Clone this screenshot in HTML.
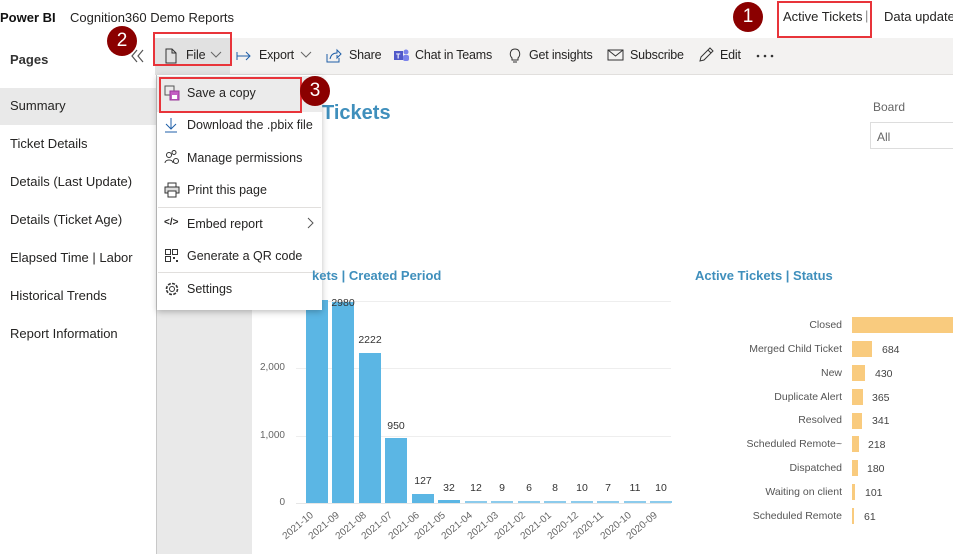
<!DOCTYPE html>
<html><head><meta charset="utf-8"><style>
*{margin:0;padding:0;box-sizing:border-box}
body{width:953px;height:554px;overflow:hidden;position:relative;background:#fff;font-family:"Liberation Sans",sans-serif;color:#252423;font-size:13px}
.a{position:absolute;white-space:nowrap}
.badge{position:absolute;width:30px;height:30px;border-radius:50%;background:#8b0000;color:#fff;font-size:19px;text-align:center;line-height:30px}
.red{position:absolute;border:2px solid #e8343a}
.tb{font-size:12.5px;color:#252423;top:48px;letter-spacing:-0.2px}
.pg{left:10px;font-size:13px}
.mi{left:187px;font-size:12.5px}
.yl{font-size:10px;color:#666;text-align:right;width:40px}
.bar{position:absolute;background:#5bb6e4;width:22px}
.vl{position:absolute;font-size:10.5px;color:#333;width:30px;text-align:center}
.xl{position:absolute;font-size:10px;color:#666;transform:rotate(-40deg);transform-origin:right top}
.sl{position:absolute;right:111px;font-size:10.5px;color:#555;text-align:right}
.sb{position:absolute;left:852px;height:16px;background:#f9cb7e}
.sv{position:absolute;font-size:10.5px;color:#444}
</style></head><body>
<div class="a" style="left:0;top:10px;font-size:13px;font-weight:bold;color:#111">Power BI</div>
<div class="a" style="left:70px;top:10px;font-size:13px">Cognition360 Demo Reports</div>
<div class="a" style="left:783px;top:9px;font-size:13px">Active Tickets</div>
<div class="a" style="left:865px;top:8px;font-size:13px;color:#888">|</div>
<div class="a" style="left:884px;top:9px;font-size:13px">Data updated</div>
<div class="red" style="left:777px;top:1px;width:95px;height:37px"></div>
<div class="badge" style="left:733px;top:2px">1</div>

<div class="a" style="left:155px;top:38px;width:798px;height:37px;background:#f3f2f1;border-bottom:1px solid #e1dfdd"></div>
<div class="a" style="left:155px;top:38px;width:75px;height:37px;background:#e1e1e1"></div>
<div class="red" style="left:153px;top:32px;width:79px;height:34px"></div>
<div class="badge" style="left:107px;top:26px">2</div>
<svg class="a" style="left:128px;top:48px" width="20" height="16"><path d="M9 2 L4 8 L9 14 M15 2 L10 8 L15 14" stroke="#555" fill="none" stroke-width="1.2"/></svg>
<div class="a" style="left:10px;top:52px;font-size:13px;font-weight:bold;color:#333">Pages</div>
<svg class="a" style="left:164px;top:48px" width="14" height="16"><path d="M2 1 H8 L12 5 V15 H2 Z M8 1 V5 H12" stroke="#333" fill="none"/></svg>
<div class="a tb" style="left:186px">File</div>
<svg class="a" style="left:210px;top:51px" width="12" height="8"><path d="M1 1 L6 6 L11 1" stroke="#666" fill="none"/></svg>
<svg class="a" style="left:236px;top:50px" width="16" height="12"><path d="M1 2 V10 M1 6 H14 M10 2 L14 6 L10 10" stroke="#1f5fa8" fill="none"/></svg>
<div class="a tb" style="left:259px">Export</div>
<svg class="a" style="left:300px;top:51px" width="12" height="8"><path d="M1 1 L6 6 L11 1" stroke="#666" fill="none"/></svg>
<svg class="a" style="left:326px;top:48px" width="16" height="15"><path d="M1 6 V14 H13 V10 M4 11 C5 6 8 5 11 5 V2 L15 6 L11 10 V7" stroke="#1f5fa8" fill="none"/></svg>
<div class="a tb" style="left:349px">Share</div>
<svg class="a" style="left:393px;top:47px" width="17" height="16"><rect x="1" y="4" width="9" height="9" fill="#5059c9"/><circle cx="13" cy="5" r="2.5" fill="#7b83eb"/><rect x="10" y="8" width="6" height="6" rx="2" fill="#7b83eb"/><text x="3" y="11.5" font-size="7" fill="#fff" font-family="Liberation Sans" font-weight="bold">T</text></svg>
<div class="a tb" style="left:415px">Chat in Teams</div>
<svg class="a" style="left:508px;top:47px" width="14" height="17"><path d="M4 11 C1 8 2 2 7 2 C12 2 13 8 10 11 V13 H4 Z M5 15 H9" stroke="#333" fill="none"/></svg>
<div class="a tb" style="left:529px">Get insights</div>
<svg class="a" style="left:607px;top:49px" width="17" height="12"><rect x="1" y="1" width="15" height="10" stroke="#333" fill="none"/><path d="M1 1 L8.5 7 L16 1" stroke="#333" fill="none"/></svg>
<div class="a tb" style="left:630px">Subscribe</div>
<svg class="a" style="left:698px;top:47px" width="16" height="16"><path d="M2 14 L3 10 L12 1 L15 4 L6 13 Z M10 3 L13 6" stroke="#333" fill="none"/></svg>
<div class="a tb" style="left:720px">Edit</div>
<svg class="a" style="left:756px;top:54px" width="18" height="4"><circle cx="2" cy="2" r="1.3" fill="#333"/><circle cx="9" cy="2" r="1.3" fill="#333"/><circle cx="16" cy="2" r="1.3" fill="#333"/></svg>

<div class="a" style="left:0;top:88px;width:156px;height:37px;background:#e9e9e9"></div>
<div class="a pg" style="top:98px">Summary</div>
<div class="a pg" style="top:136px">Ticket Details</div>
<div class="a pg" style="top:174px">Details (Last Update)</div>
<div class="a pg" style="top:212px">Details (Ticket Age)</div>
<div class="a pg" style="top:250px">Elapsed Time | Labor</div>
<div class="a pg" style="top:288px">Historical Trends</div>
<div class="a pg" style="top:326px">Report Information</div>
<div class="a" style="left:156px;top:75px;width:1px;height:479px;background:#c8c8c8"></div>
<div class="a" style="left:157px;top:75px;width:95px;height:479px;background:#e9e9e9"></div>

<div class="a" style="left:322px;top:102px;font-size:20px;font-weight:bold;color:#3f8fbc">Tickets</div>
<div class="a" style="left:873px;top:100px;font-size:12px;color:#666">Board</div>
<div class="a" style="left:870px;top:122px;width:90px;height:27px;border:1px solid #ddd"></div>
<div class="a" style="left:877px;top:130px;font-size:12px;color:#666">All</div>

<div class="a" style="left:695px;top:268px;font-size:13px;font-weight:bold;color:#3f8fbc">Active Tickets | Status</div>

<div class="a" style="left:296px;top:301px;width:375px;height:1px;background:#eee"></div>
<div class="a" style="left:296px;top:368px;width:375px;height:1px;background:#eee"></div>
<div class="a" style="left:296px;top:436px;width:375px;height:1px;background:#eee"></div>
<div class="a" style="left:296px;top:503px;width:375px;height:1px;background:#e6e6e6"></div>
<div class="a yl" style="left:245px;top:362px">2,000</div>
<div class="a yl" style="left:245px;top:430px">1,000</div>
<div class="a yl" style="left:245px;top:497px">0</div>

<div class="bar" style="left:306px;top:300px;height:203px"></div>
<div class="bar" style="left:332px;top:302px;height:201px"></div>
<div class="bar" style="left:359px;top:353px;height:150px"></div>
<div class="bar" style="left:385px;top:438px;height:65px"></div>
<div class="bar" style="left:412px;top:494px;height:9px"></div>
<div class="bar" style="left:438px;top:500px;height:3px"></div>
<div class="bar" style="left:465px;top:501px;height:2px;background:#8ccbec"></div>
<div class="bar" style="left:491px;top:501px;height:2px;background:#8ccbec"></div>
<div class="bar" style="left:518px;top:501px;height:2px;background:#8ccbec"></div>
<div class="bar" style="left:544px;top:501px;height:2px;background:#8ccbec"></div>
<div class="bar" style="left:571px;top:501px;height:2px;background:#8ccbec"></div>
<div class="bar" style="left:597px;top:501px;height:2px;background:#8ccbec"></div>
<div class="bar" style="left:624px;top:501px;height:2px;background:#8ccbec"></div>
<div class="bar" style="left:650px;top:501px;height:2px;background:#8ccbec"></div>

<div class="vl" style="left:303px;top:297px">6</div>
<div class="vl" style="left:328px;top:297px">2980</div>
<div class="vl" style="left:355px;top:334px">2222</div>
<div class="vl" style="left:381px;top:420px">950</div>
<div class="vl" style="left:408px;top:475px">127</div>
<div class="vl" style="left:434px;top:482px">32</div>
<div class="vl" style="left:461px;top:482px">12</div>
<div class="vl" style="left:487px;top:482px">9</div>
<div class="vl" style="left:514px;top:482px">6</div>
<div class="vl" style="left:540px;top:482px">8</div>
<div class="vl" style="left:567px;top:482px">10</div>
<div class="vl" style="left:593px;top:482px">7</div>
<div class="vl" style="left:620px;top:482px">11</div>
<div class="vl" style="left:646px;top:482px">10</div>

<div class="xl" style="left:272px;top:510px">2021-10</div>
<div class="xl" style="left:298px;top:510px">2021-09</div>
<div class="xl" style="left:325px;top:510px">2021-08</div>
<div class="xl" style="left:351px;top:510px">2021-07</div>
<div class="xl" style="left:378px;top:510px">2021-06</div>
<div class="xl" style="left:404px;top:510px">2021-05</div>
<div class="xl" style="left:431px;top:510px">2021-04</div>
<div class="xl" style="left:457px;top:510px">2021-03</div>
<div class="xl" style="left:484px;top:510px">2021-02</div>
<div class="xl" style="left:510px;top:510px">2021-01</div>
<div class="xl" style="left:537px;top:510px">2020-12</div>
<div class="xl" style="left:563px;top:510px">2020-11</div>
<div class="xl" style="left:590px;top:510px">2020-10</div>
<div class="xl" style="left:616px;top:510px">2020-09</div>

<div class="sl" style="top:319px">Closed</div>
<div class="sl" style="top:343px">Merged Child Ticket</div>
<div class="sl" style="top:367px">New</div>
<div class="sl" style="top:391px">Duplicate Alert</div>
<div class="sl" style="top:414px">Resolved</div>
<div class="sl" style="top:438px">Scheduled Remote~</div>
<div class="sl" style="top:462px">Dispatched</div>
<div class="sl" style="top:486px">Waiting on client</div>
<div class="sl" style="top:510px">Scheduled Remote</div>
<div class="sb" style="top:317px;width:110px"></div>
<div class="sb" style="top:341px;width:20px"></div>
<div class="sb" style="top:365px;width:13px"></div>
<div class="sb" style="top:389px;width:11px"></div>
<div class="sb" style="top:413px;width:10px"></div>
<div class="sb" style="top:436px;width:7px"></div>
<div class="sb" style="top:460px;width:6px"></div>
<div class="sb" style="top:484px;width:3px"></div>
<div class="sb" style="top:508px;width:2px"></div>
<div class="sv" style="left:882px;top:344px">684</div>
<div class="sv" style="left:875px;top:368px">430</div>
<div class="sv" style="left:872px;top:392px">365</div>
<div class="sv" style="left:872px;top:415px">341</div>
<div class="sv" style="left:868px;top:439px">218</div>
<div class="sv" style="left:867px;top:463px">180</div>
<div class="sv" style="left:865px;top:487px">101</div>
<div class="sv" style="left:864px;top:511px">61</div>

<div class="a" style="left:157px;top:75px;width:165px;height:235px;background:#fff;box-shadow:0 2px 6px rgba(0,0,0,.25)"></div>
<div class="a" style="left:157px;top:76px;width:165px;height:36px;background:#ebebeb"></div>
<div class="red" style="left:159px;top:77px;width:143px;height:36px"></div>
<div class="badge" style="left:300px;top:76px">3</div>
<div class="a" style="left:158px;top:207px;width:163px;height:1px;background:#e1dfdd"></div>
<div class="a" style="left:158px;top:272px;width:163px;height:1px;background:#e1dfdd"></div>
<svg class="a" style="left:164px;top:85px" width="16" height="16"><rect x="1" y="1" width="9" height="9" stroke="#555" fill="none"/><rect x="6" y="6" width="9" height="9" fill="#c35fc3" stroke="#9a3a9a"/><rect x="8" y="10" width="5" height="4" fill="#fff"/></svg>
<div class="a mi" style="top:86px">Save a copy</div>
<svg class="a" style="left:164px;top:117px" width="14" height="16"><path d="M7 1 V12 M2 7 L7 12 L12 7 M1 15 H13" stroke="#1f5fa8" fill="none"/></svg>
<div class="a mi" style="top:118px">Download the .pbix file</div>
<svg class="a" style="left:164px;top:149px" width="16" height="16"><circle cx="5" cy="6" r="2.5" stroke="#333" fill="none"/><circle cx="10" cy="3.5" r="2" stroke="#333" fill="none"/><path d="M1 14 C1 10 9 10 9 14" stroke="#333" fill="none"/><circle cx="12" cy="12" r="2.5" stroke="#333" fill="none"/></svg>
<div class="a mi" style="top:151px">Manage permissions</div>
<svg class="a" style="left:164px;top:182px" width="16" height="16"><rect x="4" y="1" width="8" height="4" stroke="#333" fill="none"/><rect x="1" y="5" width="14" height="6" stroke="#333" fill="#ddd"/><rect x="4" y="9" width="8" height="6" stroke="#333" fill="#fff"/></svg>
<div class="a mi" style="top:183px">Print this page</div>
<div class="a" style="left:164px;top:217px;font-size:10px;font-weight:bold">&lt;/&gt;</div>
<div class="a mi" style="top:217px">Embed report</div>
<svg class="a" style="left:307px;top:217px" width="8" height="12"><path d="M1 1 L6 6 L1 11" stroke="#555" fill="none"/></svg>
<svg class="a" style="left:165px;top:249px" width="13" height="13"><rect x="0.5" y="0.5" width="5" height="5" stroke="#333" fill="none"/><rect x="7.5" y="0.5" width="5" height="5" stroke="#333" fill="none"/><rect x="0.5" y="7.5" width="5" height="5" stroke="#333" fill="none"/><rect x="8" y="8" width="2" height="2" fill="#333"/><rect x="11" y="11" width="2" height="2" fill="#333"/></svg>
<div class="a mi" style="top:249px">Generate a QR code</div>
<svg class="a" style="left:164px;top:281px" width="16" height="16"><circle cx="8" cy="8" r="2.5" stroke="#333" fill="none"/><circle cx="8" cy="8" r="5.5" stroke="#333" fill="none" stroke-dasharray="3 1.3" stroke-width="1.6"/></svg>
<div class="a mi" style="top:282px">Settings</div>
<div class="a" style="left:312px;top:268px;font-size:13px;font-weight:bold;color:#3f8fbc">kets | Created Period</div>
</body></html>
